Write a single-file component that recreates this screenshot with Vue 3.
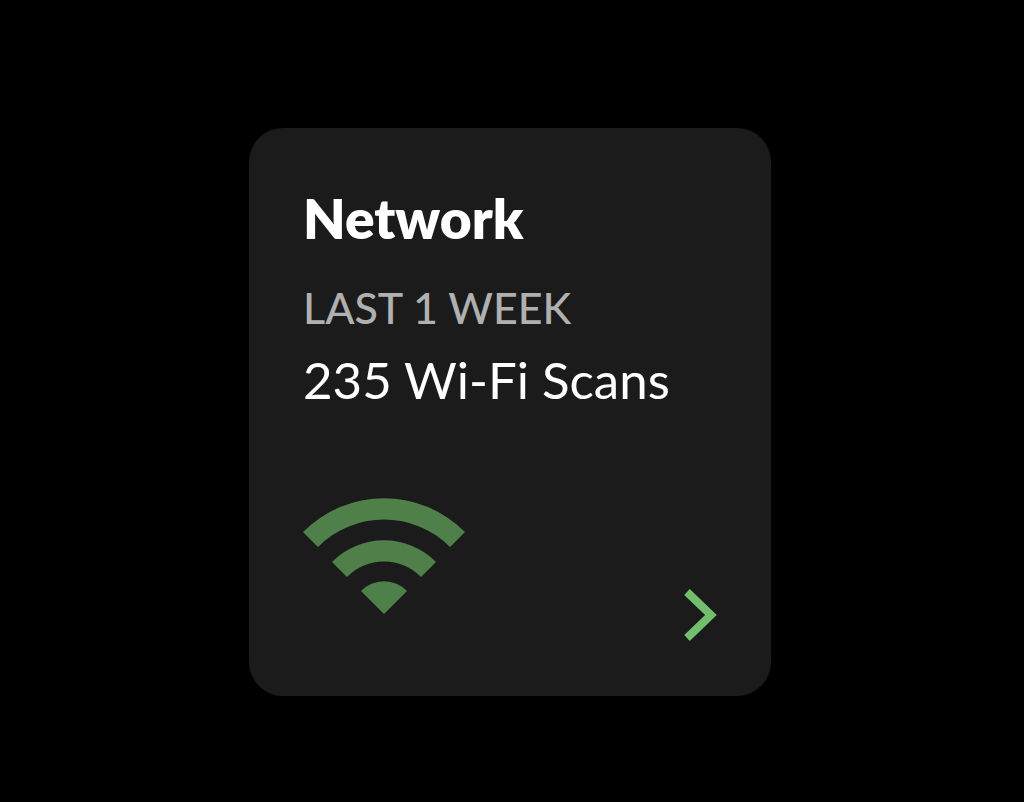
<script setup>
const card = {
  title: 'Network',
  period: 'LAST 1 WEEK',
  summary: '235 Wi-Fi Scans',
}
</script>

<template>
  <main class="stage">
    <article class="card">
      <h1 class="title">{{ card.title }}</h1>
      <p class="period">{{ card.period }}</p>
      <p class="summary">{{ card.summary }}</p>
      <footer class="footer">
        <svg class="wifi" viewBox="0 0 162 116" aria-hidden="true">
          <path d="M0 34 A114 114 0 0 1 162 34 L147 49 A93 93 0 0 0 15 49 Z" />
          <path d="M29 64 A73 73 0 0 1 133 64 L118 79 A52 52 0 0 0 44 79 Z" />
          <path d="M58 93 A32 32 0 0 1 104 93 L81 116 Z" />
        </svg>
        <button class="open" type="button" aria-label="Open network scans">
          <svg class="chevron" viewBox="0 0 34 54" aria-hidden="true">
            <path d="M4 4 L28 27 L4 50" />
          </svg>
        </button>
      </footer>
    </article>
  </main>
</template>

<style>
body {
  background: #000;
}
</style>

<style scoped>
.stage {
  display: flex;
  justify-content: center;
  min-height: 100vh;
  box-sizing: border-box;
  padding: 128px 28px 106px 24px;
  background: #000;
  font-family: Lato, "Open Sans", sans-serif;
}

.card {
  display: flex;
  flex-direction: column;
  width: 100%;
  max-width: 522px;
  box-sizing: border-box;
  padding: 56px 54px 54px;
  border-radius: 34px;
  background: #1b1b1b;
}

.title,
.period,
.summary {
  margin: 0;
  white-space: nowrap;
}

.title {
  color: #fff;
  font-size: 55px;
  font-weight: 800;
  line-height: 68px;
}

.period {
  margin-top: 26px;
  color: #b0b0b0;
  font-size: 43px;
  font-weight: 500;
  line-height: 60px;
}

.summary {
  margin-top: 12px;
  color: #fff;
  font-size: 51px;
  line-height: 60px;
}

.footer {
  display: flex;
  align-items: flex-end;
  justify-content: space-between;
  margin-top: auto;
}

.wifi {
  width: 162px;
  height: 116px;
  margin-bottom: 28px;
  fill: #508049;
}

.open {
  display: flex;
  padding: 0;
  border: 0;
  background: none;
  cursor: pointer;
}

.chevron {
  width: 34px;
  height: 54px;
  fill: none;
  stroke: #73be6c;
  stroke-width: 8;
}
</style>
